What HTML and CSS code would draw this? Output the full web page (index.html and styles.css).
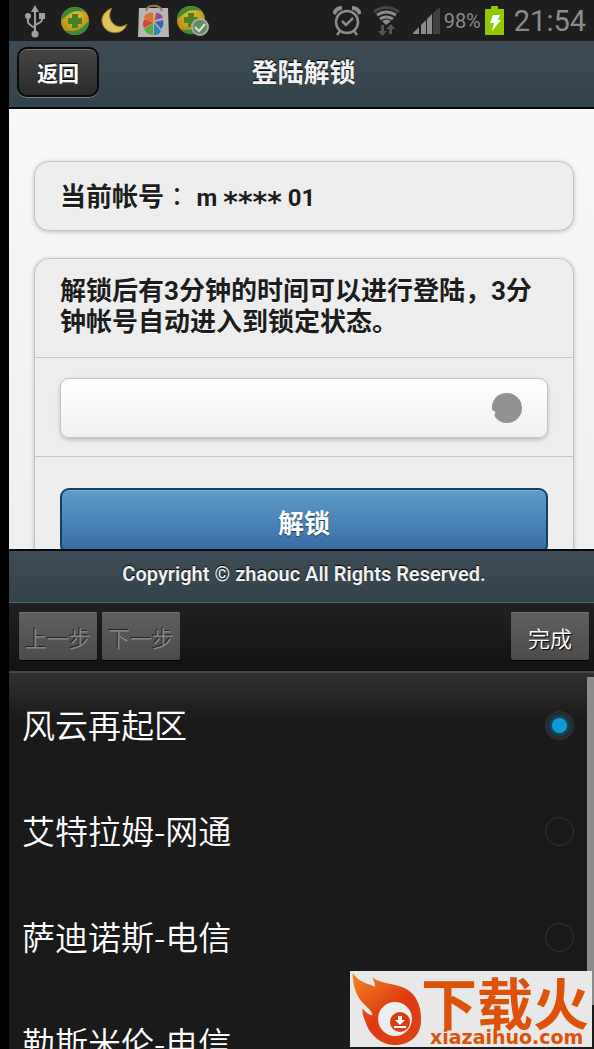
FILE: index.html
```html
<!DOCTYPE html>
<html lang="zh-CN">
<head>
<meta charset="utf-8">
<meta name="viewport" content="width=device-width, initial-scale=1">
<title>登陆解锁</title>
<link rel="stylesheet" href="styles.css">
</head>
<body>
<div class="screen">
  <div class="status">
    <div class="status-left">
      <svg width="20" height="34" viewBox="0 0 20 34" fill="none" stroke="#a0a0a0" stroke-width="2"><path d="M10 5v24M3 13v5q0 2 7 6M17 12v4q0 2-7 5"/><g fill="#a0a0a0" stroke="none"><path d="M10 1l4 7H6z"/><circle cx="3" cy="12" r="3"/><path d="M14 9h6v6h-6z"/><circle cx="10" cy="30" r="3.500"/></g></svg>
      <svg class="g1" width="30" height="30" viewBox="0 0 30 30"><defs><radialGradient id="ball" cy=".35"><stop offset="0" stop-color="#dcc43c"/><stop offset="1" stop-color="#c0921a"/></radialGradient></defs><circle cx="15" cy="15" r="14" fill="url(#ball)"/><path d="M1 14C1 6 8 1 15 1c4 0 8 2 10 5-7-2-12-1-16 2-3 2-5 4-8 6zM29 15c0 9-7 14-14 14-4 0-8-2-10-5 7 2 12 1 16-2 3-2 5-4 8-7z" fill="#3c8a35"/><path d="M12 8h6v4h4v6h-4v4h-6v-4H8v-6h4z" fill="#4a7f22"/></svg>
      <svg class="g2" width="28" height="28" viewBox="0 0 28 28"><path d="M12 1C5 4 1 9 2 15c2 13 21 15 25 2-5 4-12 3-15-2-3-4-3-9 0-14z" fill="#dfc25c" stroke="#8d6f25"/></svg>
      <svg class="g3" width="32" height="34" viewBox="0 0 32 34"><path d="M1 4h29l1 29H0z" fill="#b8b6b2"/><path d="M8 7c1-7 14-7 16 0" fill="none" stroke="#a07a51" stroke-width="2"/><path d="M15 19L6 14c0-3 4-6 9-5z" fill="#e0702b"/><path d="M15 19l1-9 6 2z" fill="#d4ae31"/><path d="M15 19L6 24c-2-3-1-7 1-9z" fill="#d8433d"/><path d="M15 19v12c-4 0-8-3-9-6z" fill="#5bab3b"/><path d="M16 19l7 8c-2 3-4 4-7 4z" fill="#2c87c0"/><path d="M17 18l8-2c1 4 0 7-2 9z" fill="#3b62bb"/><path d="M17 16l1-7c4 0 6 2 7 5z" fill="#9a46a2"/></svg>
      <svg class="g4" width="33" height="32" viewBox="0 0 33 32"><circle cx="15" cy="15" r="14" fill="url(#ball)"/><path d="M1 14C1 6 8 1 15 1c4 0 8 2 10 5-7-2-12-1-16 2-3 2-5 4-8 6zM5 24c7 2 12 1 17-3v7c-6 3-14 1-17-4z" fill="#3c8a35"/><path d="M12 8h6v4h4v6h-4v4h-6v-4H8v-6h4z" fill="#4a7f22"/><circle cx="24" cy="22" r="8" fill="#638c5c" stroke="#aaa" stroke-width="2"/><path d="M19 22l4 4 6-7" fill="none" stroke="#ddd" stroke-width="2"/></svg>
    </div>
    <div class="status-right">
      <svg width="28" height="30" viewBox="0 0 28 30" fill="none" stroke="#8c8c8c" stroke-width="2.500"><circle cx="14" cy="16" r="11"/><path d="M9 15l4 4 7-7M7 25l-3 4M21 25l3 4"/><path d="M1 8Q3 2 9 2M27 8q-2-6-8-6" stroke-width="4"/></svg>
      <svg width="28" height="30" viewBox="0 0 28 30" fill="none" stroke="#8c8c8c" stroke-width="3"><path d="M1 6q12-9 25 0" stroke="#454545"/><path d="M4 9q9-6 19 0M7 13q6-4 13 0"/><path d="M9 15q5-3 9 0l-5 4z" fill="#8c8c8c" stroke="none"/><path d="M8 19h3v6h3l-5 5-4-5h3zM16 28v-5h-3l5-5 4 5h-3v5z" fill="#555" stroke="none"/></svg>
      <svg width="27" height="27" viewBox="0 0 27 27" fill="#8c8c8c"><path d="M0 27v-1l6-6v7zM8 27v-9l5-5v14zM14 27V12l5-5v20z"/><path d="M20 27V6l7-6v27z" fill="#414141"/></svg>
      <span class="percent">98%</span>
      <svg width="19" height="29" viewBox="0 0 19 29"><path d="M6 0h7v3h6v26H0V3h6z" fill="#91c900"/><path d="M8 9h7l-2 5h3L7 25l2-8H5z" fill="#fff"/></svg>
      <span class="clock">21:54</span>
    </div>
  </div>

  <header class="header">
    <button class="back" type="button">返回</button>
    <h1>登陆解锁</h1>
  </header>

  <main class="main">
    <div class="content">
      <section class="panel account">当前帐号<span class="wide" lang="zh-TW">：</span> <span class="id">m <span class="mask">****</span> 01</span></section>
      <section class="panel">
        <p class="row note" id="note">解锁后有3分钟的时间可以进行登陆，3分钟帐号自动进入到锁定状态。</p>
        <div class="row field">
          <div class="box">
            <input type="password" aria-labelledby="note">
            <button class="clear" type="button" aria-label="清除"><svg width="30" height="30" viewBox="0 0 30 30"><path d="M15 0a15 15 0 1 1-12 24q-1-2 0-3 1-2-1-3l-2-1q-1-3 0-5Q3 0 15 0z" fill="#929292"/></svg></button>
          </div>
        </div>
        <div class="row action"><button class="unlock" type="button">解锁</button></div>
      </section>
    </div>
  </main>

  <footer class="footer">Copyright © zhaouc All Rights Reserved.</footer>

  <div class="toolbar">
    <button type="button" disabled>上一步</button>
    <button type="button" disabled>下一步</button>
    <button class="done" type="button">完成</button>
  </div>

  <div class="list">
    <label class="option"><span>风云再起区</span><input type="radio" name="zone" checked></label>
    <label class="option"><span>艾特拉姆-网通</span><input type="radio" name="zone"></label>
    <label class="option"><span>萨迪诺斯-电信</span><input type="radio" name="zone"></label>
    <label class="option"><span>勒斯米伦-电信</span><input type="radio" name="zone"></label>
    <div class="thumb"></div>
  </div>

  <svg class="brand" width="242" height="76" viewBox="0 0 242 76">
    <defs><linearGradient id="fire" x1="0" y1="0" x2=".7" y2="1"><stop offset="0" stop-color="#f08a22"/><stop offset=".6" stop-color="#df3a12"/><stop offset="1" stop-color="#dd4214"/></linearGradient></defs>
    <rect width="242" height="76" fill="#e8e8e8"/>
    <path transform="scale(.3333) translate(-30 -33)" fill="url(#fire)" d="M38 38C52 62 75 68 105 80C105 70 100 60 97 52C120 72 160 70 195 85C235 105 245 150 243 185C240 235 200 257 158 255C115 252 85 215 78 190C68 165 66 158 68 145C75 155 85 165 97 166C97 155 85 145 72 133C45 105 38 70 38 38Z"/>
    <circle cx="45" cy="48" r="17" fill="#eee"/>
    <circle cx="50" cy="51" r="10" fill="#dc3c12"/>
    <path d="M48 45h4v4h3l-5 5-5-5h3zM44 55h12v2H44z" fill="#fff"/>
    <text class="brand-name" x="71" y="54">下载火</text>
    <text class="brand-url" x="80" y="73">xiazaihuo.com</text>
  </svg>
</div>
</body>
</html>
```
FILE: styles.css
```css
* { box-sizing: border-box; }

body {
  margin: 0;
  background: #000;
  font-family: Roboto, "Noto Sans CJK SC", sans-serif;
}

button, input { font-family: inherit; margin: 0; }

.screen {
  position: relative;
  display: flex;
  flex-direction: column;
  height: 100vh;
  padding-left: 9px;
  overflow: hidden;
}

.status {
  display: flex;
  justify-content: space-between;
  align-items: center;
  height: 41px;
  padding: 0 8px 0 16px;
  background: #1e1e1e;
  color: #8c8c8c;
}

.status-left, .status-right { display: flex; align-items: center; }
.status-left { gap: 10px; }
.status-left .g1 { margin-left: 5px; }
.status-left .g3 { margin-right: -4px; }
.status-right { gap: 4px; }
.status-right svg:first-child { margin-right: 8px; }
.status-right svg:nth-child(2) { margin-right: 8px; }
.percent { font-size: 20px; }
.clock { margin-left: 6px; font-size: 29px; }

.header {
  display: grid;
  grid-template-columns: 1fr auto 1fr;
  align-items: center;
  height: 68px;
  padding: 0 4px 4px 8px;
  border-bottom: 2px solid #05090b;
  background: linear-gradient(#3e4b54, #33434c);
  color: #f1f1f1;
}

.header h1 {
  margin: 0;
  padding-top: 2px;
  font-size: 26px;
  line-height: 32px;
  text-shadow: 0 -1px 1px #000;
}

.back {
  justify-self: start;
  width: 82px;
  height: 50px;
  border: 2px solid #080a0b;
  border-radius: 10px;
  background: linear-gradient(#464646, #2a2a2a);
  box-shadow: 0 1px 0 #7b868d, inset 0 1px 0 #777;
  color: #fff;
  font-size: 21px;
  font-weight: 700;
  text-shadow: 0 -1px 1px #000;
}

.main {
  flex: 55 1 0;
  min-height: 0;
  overflow: hidden;
  background: linear-gradient(#f8f8f8, #efefef);
}

.content { padding: 52px 20px 0 25px; }

.panel {
  margin-bottom: 27px;
  border: 1px solid #c3c3c3;
  border-radius: 15px;
  background: #ededed;
  box-shadow: 0 1px 4px #bbb;
  color: #1d1d1d;
  font-size: 26px;
  font-weight: 700;
  line-height: 31px;
  text-shadow: 0 1px 0 #fff;
}

.account { padding: 17px 25px 16px; }
.wide { font-family: "Noto Sans CJK TC", sans-serif; font-weight: 400; }
.id { font-size: 24px; }
.mask {
  font-family: "DejaVu Sans", sans-serif;
  font-size: 28px;
  line-height: 0;
  vertical-align: sub;
}

.row { margin: 0; padding: 18px 25px; border-bottom: 1px solid #c6c6c6; }
.row:last-child { border-bottom: 0; }
.note { padding: 17px 25px 19px; }
.field { padding-top: 20px; }

.box {
  display: flex;
  align-items: center;
  height: 60px;
  padding: 0 25px 0 12px;
  border: 1px solid #c4c4c4;
  border-radius: 9px;
  background: linear-gradient(#fff, #f0f0f0);
  box-shadow: 0 2px 4px #bdbdbd;
}

.box input {
  flex: 1;
  min-width: 0;
  border: 0;
  outline: 0;
  background: none;
  font-size: 26px;
}

.clear { display: flex; padding: 0; border: 0; background: none; }

.action { padding-top: 31px; }

.unlock {
  width: 100%;
  height: 66px;
  border: 2px solid #123f62;
  border-radius: 9px;
  background: linear-gradient(#5f9cc9, #376ba2);
  box-shadow: inset 0 1px 0 #82b5d9;
  color: #fff;
  font-size: 26px;
  font-weight: 700;
  text-shadow: 0 1px 1px #123f62;
}

.footer {
  height: 54px;
  padding: 11px 0 11px 5px;
  border-top: 2px solid #05090b;
  border-bottom: 1px solid #56646c;
  background: linear-gradient(#3e4b54, #33434c);
  color: #f1f1f1;
  font-size: 20px;
  font-weight: 600;
  line-height: 24px;
  text-align: center;
  text-shadow: 0 -1px 1px #000;
}

.toolbar {
  display: flex;
  gap: 5px;
  padding: 9px 5px 11px 10px;
  border-bottom: 2px solid #484848;
  background: linear-gradient(#212121, #131313);
}

.toolbar button {
  width: 78px;
  height: 48px;
  padding: 2px 0 0;
  border: 0;
  border-radius: 2px;
  background: linear-gradient(#606060, #4b4b4b);
  box-shadow: 0 1px 1px #000, inset 0 1px 0 #777;
  color: #fff;
  font-size: 22px;
  font-weight: 350;
  text-shadow: 1px 1px 1px #000;
}

.toolbar button:disabled { color: #888; text-shadow: -1px -1px 0 #222; }
.toolbar .done { margin-left: auto; }

.list {
  position: relative;
  flex: 47 1 0;
  min-height: 0;
  overflow: hidden;
  background: linear-gradient(#303030, #1a1a1a 48px);
}

.option {
  display: flex;
  justify-content: space-between;
  align-items: center;
  height: 106px;
  padding: 0 20px 0 13px;
  border-bottom: 1px solid #171717;
  color: #fff;
  font-family: "Noto Sans CJK SC", sans-serif;
  font-size: 33px;
  font-weight: 350;
}

.option span { padding-bottom: 4px; }

.option input {
  appearance: none;
  width: 29px;
  height: 29px;
  border: 1px solid #353535;
  border-radius: 50%;
}

.option input:checked {
  background: radial-gradient(circle, #0b9bd6 0 7px, #14485f 8px, #202a30 12px, #252a2d 14px);
}

.thumb {
  position: absolute;
  top: 4px;
  right: 0;
  width: 7px;
  height: 328px;
  background: #8c8c8c;
}

.brand { position: absolute; right: 2px; bottom: 2px; }
.brand text { fill: #dd5108; font-weight: 700; }
.brand-name { font-family: "Noto Sans CJK SC", sans-serif; font-size: 56px; }
.brand-url { font-family: "DejaVu Sans", sans-serif; font-size: 19px; }
```
